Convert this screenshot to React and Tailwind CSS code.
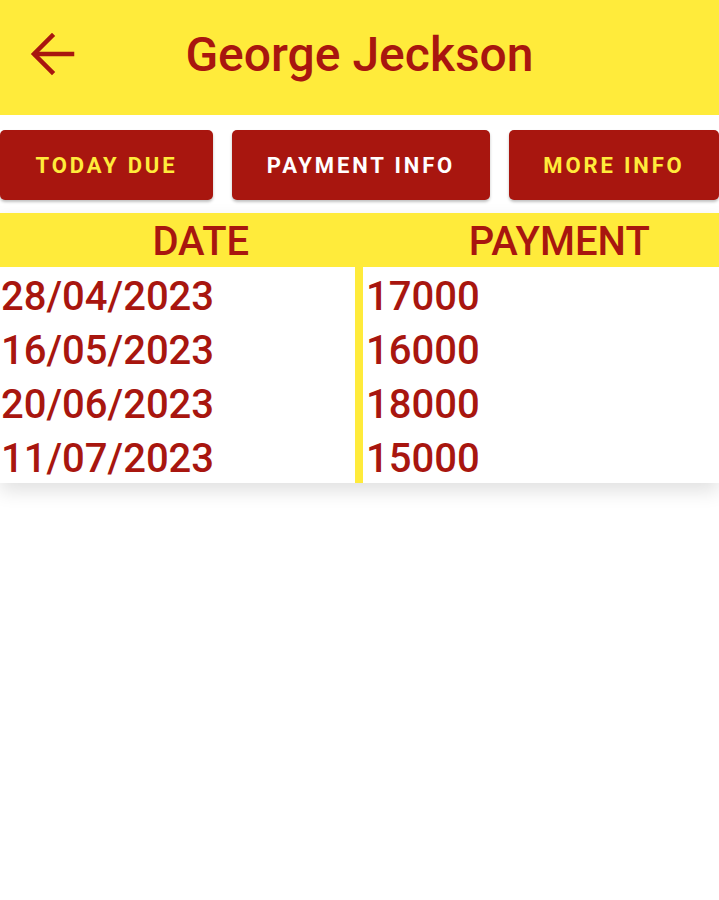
import React from 'react';

const rows = [
  { date: '28/04/2023', amount: '17000' },
  { date: '16/05/2023', amount: '16000' },
  { date: '20/06/2023', amount: '18000' },
  { date: '11/07/2023', amount: '15000' },
];

const tabs = [
  { label: 'TODAY DUE', w: 'w-[213px]', color: 'text-[#ffeb3b]' },
  { label: 'PAYMENT INFO', w: 'w-[258px]', color: 'text-white' },
  { label: 'MORE INFO', w: 'w-[210px]', color: 'text-[#ffeb3b]' },
];

const BackArrow = () => (
  <svg width="50" height="50" viewBox="0 0 50 50" fill="none" stroke="#a8160f" strokeWidth="4.5" strokeLinecap="square">
    <path d="M45 25H9" />
    <path d="M25 7L7 25L25 43" />
  </svg>
);

export default function App() {
  return (
    <div className="min-h-[900px] bg-white font-['Roboto',sans-serif] text-[#a8160f]">
      {/* Header */}
      <div className="h-[115px] bg-[#ffeb3b] flex items-center">
        <div className="w-[110px] pl-[27px] pb-[7px] flex items-center">
          <BackArrow />
        </div>
        <h1 className="flex-1 text-center text-[48px] font-medium leading-none pb-[6px]">George Jeckson</h1>
        <div className="w-[110px]" />
      </div>

      {/* Tabs */}
      <div className="flex justify-between mt-[15px]">
        {tabs.map((t) => (
          <button
            key={t.label}
            className={`${t.w} h-[70px] bg-[#a8160f] rounded-[5px] shadow-[0_2px_3px_rgba(0,0,0,0.25)] text-[22px] font-bold tracking-[0.13em] ${t.color}`}
          >
            {t.label}
          </button>
        ))}
      </div>

      {/* Table */}
      <div className="mt-[13px] shadow-[0_8px_18px_rgba(0,0,0,0.12)]">
        <div className="h-[54px] bg-[#ffeb3b] grid grid-cols-2 items-center text-[40px] font-medium leading-none pt-[4px]">
          <div className="text-center pl-[42px]">DATE</div>
          <div className="text-center pl-[40px]">PAYMENT</div>
        </div>
        <div className="flex">
          <div className="w-[355px]">
            {rows.map((r) => (
              <div key={r.date} className="h-[54px] flex items-center pl-[1px] pt-[6px] text-[40px] font-medium leading-none">
                {r.date}
              </div>
            ))}
          </div>
          <div className="w-[8px] bg-[#ffeb3b]" />
          <div className="flex-1">
            {rows.map((r) => (
              <div key={r.amount} className="h-[54px] flex items-center pl-[3px] pt-[6px] text-[40px] font-medium leading-none">
                {r.amount}
              </div>
            ))}
          </div>
        </div>
      </div>
    </div>
  );
}
